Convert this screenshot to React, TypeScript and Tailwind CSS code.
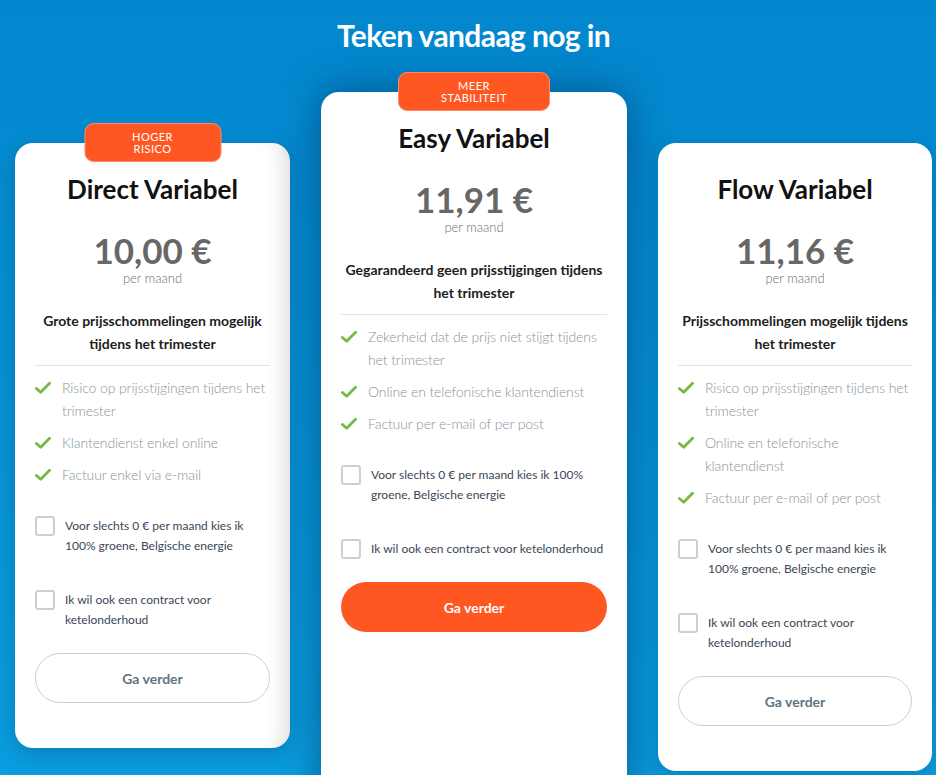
import React from "react";

type Plan = {
  name: string;
  price: string;
  subtitle: string;
  features: string[];
  badge?: string[];
  badgeW?: string;
  featured?: boolean;
  width: string;
  extra?: string;
};

const plans: Plan[] = [
  {
    name: "Direct Variabel",
    price: "10,00 €",
    subtitle: "Grote prijsschommelingen mogelijk tijdens het trimester",
    features: [
      "Risico op prijsstijgingen tijdens het trimester",
      "Klantendienst enkel online",
      "Factuur enkel via e-mail",
    ],
    badge: ["HOGER", "RISICO"],
    badgeW: "w-[137px]",
    width: "w-[275px]",
    extra: "mt-[51px] shadow-[inset_-22px_0_18px_-14px_rgba(0,0,0,0.09),0_6px_20px_rgba(0,40,80,0.25)]",
  },
  {
    name: "Easy Variabel",
    price: "11,91 €",
    subtitle: "Gegarandeerd geen prijsstijgingen tijdens het trimester",
    features: [
      "Zekerheid dat de prijs niet stijgt tijdens het trimester",
      "Online en telefonische klantendienst",
      "Factuur per e-mail of per post",
    ],
    badge: ["MEER", "STABILITEIT"],
    badgeW: "w-[152px]",
    featured: true,
    width: "w-[306px]",
    extra: "h-[720px] shadow-[0_0_40px_rgba(0,30,70,0.5)]",
  },
  {
    name: "Flow Variabel",
    price: "11,16 €",
    subtitle: "Prijsschommelingen mogelijk tijdens het trimester",
    features: [
      "Risico op prijsstijgingen tijdens het trimester",
      "Online en telefonische klantendienst",
      "Factuur per e-mail of per post",
    ],
    width: "w-[274px]",
    extra: "mt-[51px] shadow-[0_6px_20px_rgba(0,40,80,0.25)]",
  },
];

function Check() {
  return (
    <svg width="16" height="14" viewBox="0 0 17 14" className="shrink-0 mt-[5px]">
      <polyline
        points="1.5,7.5 6,11.5 15.5,2"
        fill="none"
        stroke="#78b944"
        strokeWidth="3"
        strokeLinecap="round"
        strokeLinejoin="round"
      />
    </svg>
  );
}

function CheckboxRow({ label }: { label: string }) {
  return (
    <label className="flex items-start">
      <span className="mt-0 h-[20px] w-[20px] shrink-0 rounded-[3px] border-2 border-[#c9d1d8] bg-white" />
      <span className="ml-[10px] text-[12px] leading-[20px] text-[#3a4757]">{label}</span>
    </label>
  );
}

function Card({ p }: { p: Plan }) {
  return (
    <div className={`relative shrink-0 rounded-[18px] bg-white px-5 pt-[30px] pb-[45px] ${p.width} ${p.extra ?? ""}`}>
      {p.badge && (
        <div
          className={`absolute -top-[20px] left-1/2 -translate-x-1/2 ${p.badgeW} h-[39px] rounded-[9px] border border-[#ff8a65] bg-[#ff5722] flex flex-col items-center justify-center text-[11px] leading-[12px] tracking-[0.5px] text-white`}
        >
          <span>{p.badge[0]}</span>
          <span>{p.badge[1]}</span>
        </div>
      )}
      <h2 className="text-center text-[26px] leading-8 font-bold text-[#111]">{p.name}</h2>
      <div className="mt-[27px] text-center text-[35px] leading-[36px] font-bold text-[#676767]">{p.price}</div>
      <div className="mt-[1px] text-center text-[13px] leading-[18px] font-light text-[#6f6f6f]">per maand</div>
      <p className="mt-[22px] text-center text-[14px] leading-[23px] font-bold text-[#1d1d1d]">{p.subtitle}</p>
      <div className="mt-[10px] border-t border-[#e4e4e4]" />
      <ul className="mt-[10px] flex flex-col gap-[9px]">
        {p.features.map((f) => (
          <li key={f} className="flex items-start">
            <Check />
            <span className="-mr-[4px] ml-[11px] text-[14px] leading-[23px] font-light tracking-[-0.1px] text-[#89939b]">{f}</span>
          </li>
        ))}
      </ul>
      <div className="mt-[30px] flex flex-col gap-[34px]">
        <CheckboxRow label="Voor slechts 0 € per maand kies ik 100% groene, Belgische energie" />
        <CheckboxRow label="Ik wil ook een contract voor ketelonderhoud" />
      </div>
      {p.featured ? (
        <button className="mt-[23px] h-[50px] w-full rounded-full bg-[#ff5722] text-[14px] font-bold text-white">
          Ga verder
        </button>
      ) : (
        <button className="mt-[23px] h-[50px] w-full rounded-full border border-[#c8d0d6] bg-white text-[14px] font-bold text-[#607580]">
          Ga verder
        </button>
      )}
    </div>
  );
}

export default function App() {
  return (
    <div
      className="h-[775px] w-[936px] overflow-hidden bg-gradient-to-b from-[#0386cd] to-[#0a9ddf]"
      style={{ fontFamily: "Lato, 'Open Sans', sans-serif" }}
    >
      <div className="ml-[15px] w-[917px]">
        <h1 className="pt-[15px] text-center text-[30px] leading-[40px] font-bold tracking-[-0.6px] text-white">
          Teken vandaag nog in
        </h1>
        <div className="mt-[37px] flex items-start gap-[31px]">
          {plans.map((p) => (
            <Card key={p.name} p={p} />
          ))}
        </div>
      </div>
    </div>
  );
}
